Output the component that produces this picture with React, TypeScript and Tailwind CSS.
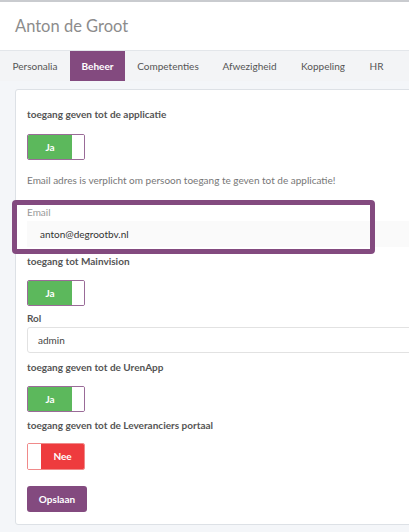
import React from "react";

const font = { fontFamily: "Lato, 'Open Sans', sans-serif" };

function Toggle({ on }: { on: boolean }) {
  if (on) {
    return (
      <div className="flex h-[26px] w-[58px] overflow-hidden rounded-[2px] border border-[#9a6b98] bg-white">
        <div className="flex w-[44px] items-center justify-center bg-[#5cb85c] text-[10px] font-bold text-white">Ja</div>
        <div className="flex-1 bg-white" />
      </div>
    );
  }
  return (
    <div className="flex h-[27px] w-[58px] overflow-hidden rounded-[2px] border border-[#f08a8a] bg-white">
      <div className="w-[13px] bg-white" />
      <div className="flex flex-1 items-center justify-center bg-[#ee3b3e] text-[10px] font-bold text-white">Nee</div>
    </div>
  );
}

export default function App() {
  const tabs = [
    { t: "Personalia", w: "w-[70px]" },
    { t: "Beheer", w: "w-[55px]", active: true },
    { t: "Competenties", w: "w-[86px]" },
    { t: "Afwezigheid", w: "w-[77px]" },
    { t: "Koppeling", w: "w-[70px]" },
    { t: "HR", w: "w-[37px]" },
  ];
  return (
    <div className="h-[532px] w-[409px] overflow-hidden bg-[#f4f6f9]" style={font}>
      <div className="h-[2px] bg-[#c9cbcf]" />
      <div className="flex h-[48px] items-center bg-white pl-[15px] text-[16.5px] text-[#8c8c8c]">Anton de Groot</div>
      <div className="flex h-[31px] border-t border-[#e3e6ea] bg-[#f3f4f6]">
        {tabs.map((tab) => (
          <div
            key={tab.t}
            className={
              "flex shrink-0 items-center justify-center text-[10px] " +
              tab.w +
              (tab.active ? " bg-[#834a7f] font-bold text-white" : " text-[#555]")
            }
          >
            {tab.t}
          </div>
        ))}
      </div>
      <div className="relative ml-[15px] mt-[8px] w-[420px] rounded-[3px] border border-[#dde1e6] bg-white pl-[11px] pt-[16px] pb-[12px]">
        <div className="h-[16px] text-[10px] font-bold leading-[16px] text-[#555]">toegang geven tot de applicatie</div>
        <div className="mt-[12px]"><Toggle on /></div>
        <div className="mt-[12px] h-[16px] text-[10px] leading-[16px] text-[#777]">Email adres is verplicht om persoon toegang te geven tot de applicatie!</div>
        <div className="mt-[16px] h-[16px] text-[10px] leading-[16px] text-[#999]">Email</div>
        <div className="mt-[1px] flex h-[26px] items-center bg-[#fafafa] pl-[13px] text-[10px] text-[#333]">anton@degrootbv.nl</div>
        <div className="mt-[6px] h-[16px] text-[10px] font-bold leading-[16px] text-[#555]">toegang tot Mainvision</div>
        <div className="mt-[11px]"><Toggle on /></div>
        <div className="mt-[4px] h-[16px] text-[10px] font-bold leading-[16px] text-[#555]">Rol</div>
        <div className="mt-[1px] flex h-[26px] items-center rounded-[3px] border border-[#e2e2e2] bg-white pl-[10px] text-[10px] text-[#444]">admin</div>
        <div className="mt-[6px] h-[16px] text-[10px] font-bold leading-[16px] text-[#555]">toegang geven tot de UrenApp</div>
        <div className="mt-[11px]"><Toggle on /></div>
        <div className="mt-[5px] h-[16px] text-[10px] font-bold leading-[16px] text-[#555]">toegang geven tot de Leveranciers portaal</div>
        <div className="mt-[10px]"><Toggle on={false} /></div>
        <button className="mt-[16px] flex h-[26px] w-[60px] items-center justify-center rounded-[3px] bg-[#834a7f] text-[10px] font-bold text-white">Opslaan</button>
        <div className="pointer-events-none absolute left-[-4px] top-[110px] h-[54px] w-[363px] rounded-[4px] border-[5px] border-[#834a7f]" />
      </div>
    </div>
  );
}
